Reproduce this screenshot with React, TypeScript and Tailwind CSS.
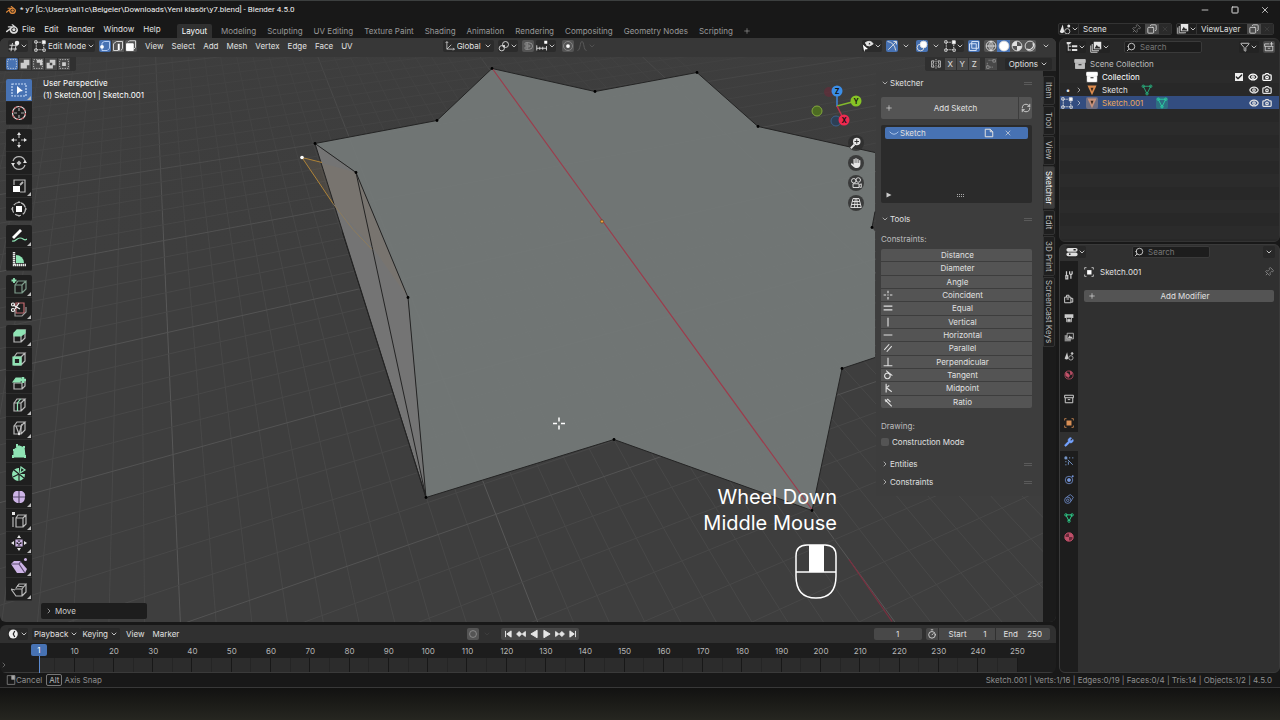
import type { ReactNode } from "react"
import {
  Camera,
  Check,
  ChevronDown,
  ChevronRight,
  Copy,
  Eye,
  Filter,
  Magnet,
  Minus,
  Pin,
  Plus,
  RefreshCw,
  Search,
  Square,
  Timer,
  Wrench,
  X,
} from "lucide-react"
import { SiBlender } from "react-icons/si"
import { FaHand } from "react-icons/fa6"

/* ---------- small building blocks ---------- */

function Svg({ children, className = "w-3 h-3" }: { children: ReactNode; className?: string }) {
  return (
    <svg
      viewBox="0 0 16 16"
      className={`shrink-0 ${className}`}
      fill="none"
      stroke="currentColor"
      strokeWidth="1.2"
      aria-hidden="true"
    >
      {children}
    </svg>
  )
}

function IconButton({
  label,
  className = "",
  children,
}: {
  label: string
  className?: string
  children: ReactNode
}) {
  return (
    <button aria-label={label} className={`flex shrink-0 items-center justify-center ${className}`}>
      {children}
    </button>
  )
}

function Chevron() {
  return <ChevronDown className="w-2 h-2 shrink-0 text-[#c0c0c0]" strokeWidth={3} />
}

/* ---------- icons ---------- */

const editorIcon = (
  <Svg>
    <path d="M2 7h11M1 12h11M6 4 4 15M11 6l-2 9" />
    <circle cx="12" cy="4" r="3" fill="#eee" stroke="none" />
  </Svg>
)

const editModeIcon = (
  <Svg>
    <path d="M4 3h6M3 4v8M4 13h8M13 6v6" strokeDasharray="2 1" />
    <path d="M1 1h3v3H1zM1 12h3v3H1zM12 12h3v3h-3z" />
    <path d="M11 1h4v4h-4z" fill="#fff" />
  </Svg>
)

const vertexIcon = (
  <Svg>
    <path d="M4 7V4l3-2h7v9l-3 3H4v-3" stroke="#bcd3f7" />
    <circle cx="4" cy="9" r="2.5" fill="#fff" stroke="none" />
  </Svg>
)

const edgeIcon = (
  <Svg>
    <path d="M8 14H2V5l4-3h8v9l-2 3" />
    <path d="M9 5v9" stroke="#fff" strokeWidth="2.6" />
  </Svg>
)

const faceIcon = (
  <Svg>
    <path d="M2 5h9v9H2z" fill="#fff" stroke="#fff" />
    <path d="m4 3 2-2h8v9l-2 2" />
  </Svg>
)

const sceneIcon = (
  <Svg>
    <path d="M5 2 1 12q3 3 6 0z" fill="#e6e6e6" stroke="none" />
    <circle cx="11" cy="11" r="3.5" />
    <circle cx="13" cy="4" r="2" fill="#e6e6e6" stroke="none" />
  </Svg>
)

const layerIcon = (
  <Svg>
    <path d="M5 1h10v10H5z" fill="#e6e6e6" stroke="none" />
    <path d="m6 10 3-5 2 3 1-1 2 3z" fill="#2a2a2a" stroke="none" />
    <path d="M3 4v9h9M1 6v9h9" />
  </Svg>
)

const collectionIcon = (
  <Svg>
    <path d="M1 2h14v4H1z" fill="currentColor" />
    <path d="M2 7h12v7H2z" fill="currentColor" />
    <path d="M6 9h4" stroke="#222" strokeWidth="1.6" />
  </Svg>
)

const meshData = (
  <Svg>
    <path d="M3 3h10L8 13z" />
    <circle cx="3" cy="3" r="1.6" />
    <circle cx="13" cy="3" r="1.6" />
    <circle cx="8" cy="13" r="1.6" />
  </Svg>
)

const meshObject = (
  <Svg>
    <path d="M2 2h12L8 15z" fill="currentColor" stroke="none" />
    <path d="M6 5h4L8 10z" fill="#3a2a20" stroke="none" />
  </Svg>
)

const sphere = (kind: string) => (
  <Svg>
    <circle cx="8" cy="8" r="6.5" fill={kind === "solid" ? "#fff" : "none"} />
    {kind === "wire" && <path d="M1.5 8h13M8 1.5v13M8 1.5q-6 6.5 0 13M8 1.5q6 6.5 0 13" />}
    {kind === "material" && (
      <path d="M8 1.5V8h6.5A6.5 6.5 0 0 1 8 14.5V8H1.5A6.5 6.5 0 0 1 8 1.5z" fill="currentColor" stroke="none" />
    )}
    {kind === "rendered" && <path d="M12 4a6 6 0 0 1-8 8" strokeWidth="1.6" />}
  </Svg>
)

const green = "#8fe3b4"
const lilac = "#cdb4e6"

// wire cube shared by most of the mesh tools
const cube = <path d="M3 6h7v8H3zM3 6l3-4h8l-4 4M14 2v8l-4 4" />

const toolGroups: { name: string; more?: boolean; art: ReactNode }[][] = [
  [
    {
      name: "Select Box",
      more: true,
      art: (
        <>
          <path d="M1 2h14v12H1z" strokeDasharray="2 1" stroke="#c9dcf8" />
          <path d="m6 4 6 5-3 .5L6 12z" fill="#fff" stroke="none" />
        </>
      ),
    },
    {
      name: "Cursor",
      art: (
        <>
          <circle cx="8" cy="8" r="6.500" stroke="#e9e9e9" />
          <circle cx="8" cy="8" r="6.500" stroke="#c65f64" strokeDasharray="2.500 2.500" />
          <path d="M8 3v3M8 10v3M3 8h3M10 8h3" stroke="#aaa" />
        </>
      ),
    },
  ],
  [
    {
      name: "Move",
      art: (
        <>
          <path d="M8 3v3M8 10v3M3 8h3M10 8h3" />
          <path d="m8 0 2 3H6zM8 16l2-3H6zM0 8l3-2v4zM16 8l-3-2v4z" fill="#e6e6e6" stroke="none" />
        </>
      ),
    },
    {
      name: "Rotate",
      art: (
        <>
          <path d="M2 6a6.300 6.300 0 0 1 12 0M14 10a6.300 6.300 0 0 1-12 0" />
          <path d="M0 8h4l-2 3zM12 8h4l-2-3z" fill="#e6e6e6" stroke="none" />
          <path d="m8 5.500 2.500 2.500L8 10.500 5.500 8z" fill="#bbb" stroke="none" />
        </>
      ),
    },
    {
      name: "Scale",
      more: true,
      art: (
        <>
          <path d="M3 7V2h11v12H9" />
          <path d="M2 8h7v6H2z" fill="#fff" stroke="none" />
          <path d="m9 7 3-3" strokeWidth="1.800" />
        </>
      ),
    },
    {
      name: "Transform",
      art: (
        <>
          <circle cx="8" cy="8" r="6.500" strokeDasharray="6 2" />
          <path d="M5 5h6v6H5z" fill="#fff" stroke="none" />
          <path d="m8 0 2 2H6zM8 16l2-2H6zM0 8l2-2v4zM16 8l-2-2v4z" fill="currentColor" stroke="none" />
        </>
      ),
    },
  ],
  [
    {
      name: "Annotate",
      more: true,
      art: (
        <>
          <path d="m2 10 8-8" stroke="#fff" strokeWidth="2.800" />
          <path d="M1 13c4 1 4-3 8-3s4 4 7 1" stroke={green} />
        </>
      ),
    },
    {
      name: "Measure",
      art: (
        <>
          <path d="M5 12V4a8 8 0 0 1 8 8z" fill={green} stroke="none" />
          <path d="M3 1v13h12" stroke="#e6e6e6" strokeWidth="2.400" strokeDasharray="1.500 .5" />
        </>
      ),
    },
  ],
  [
    {
      name: "Add Cube",
      more: true,
      art: (
        <>
          <path d="M4 7h7v8H4zM4 7l3-4h8l-4 4M15 3v8l-4 4" stroke="#7d9c8b" />
          <path d="M3 0v5M.5 2.500h5" stroke={green} strokeWidth="1.800" />
        </>
      ),
    },
    {
      name: "Bisect",
      more: true,
      art: (
        <>
          <path d="M5 2h8v10H5z" stroke="#c46a70" />
          <path d="M4 9v6h7l4-4V6" stroke="#999" />
          <path d="m2 4 7 4M4 8l4-6" stroke="#eee" strokeWidth="1.300" />
          <circle cx="2" cy="9" r="1.500" stroke="#eee" />
          <circle cx="2" cy="3.500" r="1.500" stroke="#eee" />
        </>
      ),
    },
  ],
  [
    {
      name: "Extrude Region",
      more: true,
      art: (
        <>
          {cube}
          <path d="M3 8V5l3-3h8v3l-4 3z" fill={green} stroke={green} />
        </>
      ),
    },
    {
      name: "Inset Faces",
      art: (
        <>
          {cube}
          <path d="M2 6h8v8H2z" fill={green} stroke={green} />
          <path d="M4.500 8.500h3v3h-3z" fill="#222" stroke="#222" />
        </>
      ),
    },
    {
      name: "Bevel",
      art: (
        <>
          <path d="M3 9h8v6H3zM14 7v5l-3 3" />
          <path d="m2 8 3-4h5l-1 4z" fill={green} stroke={green} />
          <path d="M12 3v6M10 6h5" stroke={green} strokeWidth="2.500" />
        </>
      ),
    },
    {
      name: "Loop Cut",
      more: true,
      art: (
        <>
          {cube}
          <path d="M6.500 14V6l3-4" stroke={green} />
        </>
      ),
    },
    {
      name: "Knife",
      more: true,
      art: (
        <>
          {cube}
          <path d="m5 6 3 8 3-10" />
          <circle cx="8" cy="14" r="1" fill="#fff" stroke="none" />
        </>
      ),
    },
    {
      name: "Poly Build",
      art: (
        <>
          <path d="m3 7 5-4 5 2 1 9H3z" fill={green} stroke={green} />
          <path d="M6 1v3M2 12v3M14 12v3M13 3v2M3 6v2" stroke={green} strokeWidth="2" />
        </>
      ),
    },
    {
      name: "Spin",
      art: (
        <>
          <path d="M8 8V2a6.500 6.500 0 1 0 6 6z" fill={green} stroke="none" />
          <path d="M8 8 3 4M8 8l-6 3M8 8v7M8 8l5 4" stroke="#222" />
          <path d="m9 7 1-6 4 3z" stroke={green} />
        </>
      ),
    },
    {
      name: "Smooth",
      more: true,
      art: (
        <>
          <path d="M5 2h6q4 2 3 6 0 5-4 6H6Q1 12 2 7q0-4 3-5z" fill={lilac} stroke="none" />
          <path d="M2 8h12M8 2v12" stroke="#5b4b6e" />
        </>
      ),
    },
    {
      name: "Edge Slide",
      more: true,
      art: (
        <>
          <path d="M5 6h7v9H5zM5 6l2-3h8l-3 3M15 3v9l-3 3M2 5v10" />
          <path d="M1 0h3v3H1z" fill="#e6e6e6" stroke="none" />
        </>
      ),
    },
    {
      name: "Shrink/Fatten",
      more: true,
      art: (
        <>
          <path d="M5 5h6v6H5zM5 5l6 6M11 5l-6 6" stroke={lilac} />
          <path d="m8 0 2 3H6zM8 16l2-3H6zM0 8l3-2v4zM16 8l-3-2v4z" fill="#e6e6e6" stroke="none" />
        </>
      ),
    },
    {
      name: "Shear",
      more: true,
      art: (
        <>
          <path d="M0 6l3-3h6l7 8-2 4H6z" fill={lilac} stroke="none" />
          <path d="M0 6h8l6 9M8 6l2-3" stroke="#5b4b6e" />
          <circle cx="14.500" cy="1.500" r="1.500" fill={lilac} stroke="none" />
        </>
      ),
    },
    {
      name: "Rip Region",
      more: true,
      art: <path d="M4 8h7v7H5L0 8l4 1M5 7l3-4h7l-4 5M15 3v8l-4 4M6 5l7 1" />,
    },
  ],
]

/* ---------- top bars ---------- */

const appMenus = ["File", "Edit", "Render", "Window", "Help"]
const workspaces = [
  "Layout",
  "Modeling",
  "Sculpting",
  "UV Editing",
  "Texture Paint",
  "Shading",
  "Animation",
  "Rendering",
  "Compositing",
  "Geometry Nodes",
  "Scripting",
]

function TitleBar() {
  return (
    <header className="flex h-5 items-center border-t border-[#3c3f3f] pl-1.5 pr-2.5 pb-0.5">
      <SiBlender className="w-2.5 h-2.5 mr-1 text-[#e08a3c]" />
      <h1 className="font-[Roboto,sans-serif] text-[8px] text-[#f0f0f0]">
        * y7 [C:\Users\ali1c\Belgeler\Downloads\Yeni klasör\y7.blend] - Blender 4.5.0
      </h1>
      <div className="ml-auto flex gap-5 text-[#dddddd]">
        <IconButton label="Minimize" className="w-2.5">
          <Minus className="w-2.5 h-2.5" />
        </IconButton>
        <IconButton label="Maximize" className="w-2.5">
          <Square className="w-2 h-2" strokeWidth={3} />
        </IconButton>
        <IconButton label="Close" className="w-2.5">
          <X className="w-2.5 h-2.5" />
        </IconButton>
      </div>
    </header>
  )
}

function DataBlock({ label, value, icon, pin }: { label: string; value: string; icon: ReactNode; pin?: boolean }) {
  return (
    <div className="flex h-3 items-center overflow-hidden rounded-xs border border-[#333] bg-[#1d1d1d]">
      <IconButton label={`Browse ${label}`} className="w-5 border-r border-[#333] text-[#cccccc]">
        {icon}
        <Chevron />
      </IconButton>
      <input
        aria-label={label}
        defaultValue={value}
        className={`bg-transparent px-1 text-[8px] outline-none ${pin ? "w-[52px]" : "w-[50px]"}`}
      />
      {pin && <Pin className="w-2.5 h-2.5 mr-1 rotate-45 text-[#777777]" />}
      <IconButton label={`New ${label}`} className="w-3.5 h-3 bg-[#4a4a4a]">
        <Copy className="w-2.5 h-2.5 -scale-x-100" />
      </IconButton>
      <IconButton label={`Remove ${label}`} className="w-3 h-3 bg-[#2a2a2a] text-[#444444]">
        <X className="w-2 h-2" />
      </IconButton>
    </div>
  )
}

function TopBar() {
  return (
    <div className="flex h-[18px] items-center pl-1.5 pr-1.5">
      <SiBlender className="w-3 h-3 mr-1 text-[#dddddd]" />
      <nav aria-label="Application" className="flex gap-[9px]">
        {appMenus.map((m) => (
          <button key={m}>{m}</button>
        ))}
      </nav>
      <nav aria-label="Workspaces" className="ml-4 flex h-3.5 items-center self-end text-[#989898]">
        {workspaces.map((w) => (
          <button
            key={w}
            className={
              w === "Layout" ? "h-full rounded-t-xs bg-[#303030] px-[5px] mr-1 text-white" : "h-full px-[5px] mr-px"
            }
          >
            {w}
          </button>
        ))}
        <IconButton label="Add Workspace" className="ml-1">
          <Plus className="w-2 h-2" />
        </IconButton>
      </nav>
      <div className="ml-auto flex gap-1">
        <DataBlock label="Scene" value="Scene" icon={sceneIcon} pin />
        <DataBlock label="View Layer" value="ViewLayer" icon={layerIcon} />
      </div>
    </div>
  )
}

/* ---------- 3D viewport ---------- */

const viewMenus = ["View", "Select", "Add", "Mesh", "Vertex", "Edge", "Face", "UV"]

function ViewportHeader() {
  return (
    <div className="relative flex h-[19px] items-center bg-[#373737] pl-2 pr-1 pb-[3px]">
      <IconButton label="Editor Type" className="w-5 h-3 rounded-xs bg-[#2b2b2b]">
        {editorIcon}
        <Chevron />
      </IconButton>
      <div className="ml-1 flex h-3 items-center rounded-xs bg-[#2b2b2b] pl-0.5">
        {editModeIcon}
        <select aria-label="Mode" className="appearance-none bg-transparent pl-0.5 outline-none">
          <option>Edit Mode</option>
        </select>
        <Chevron />
      </div>
      <div className="ml-1 mr-2 flex gap-px">
        <IconButton label="Vertex Select" className="w-3 h-3 rounded-xs bg-[#4772b3]">
          {vertexIcon}
        </IconButton>
        <IconButton label="Edge Select" className="w-3 h-3 bg-[#545454]">
          {edgeIcon}
        </IconButton>
        <IconButton label="Face Select" className="w-3 h-3 rounded-xs bg-[#545454]">
          {faceIcon}
        </IconButton>
      </div>
      <nav aria-label="Viewport" className="flex gap-2">
        {viewMenus.map((m) => (
          <button key={m}>{m}</button>
        ))}
      </nav>

      <div className="ml-[90px] flex h-3 items-center rounded-xs bg-[#2b2b2b] px-0.5">
        <Svg className="w-2.5 h-2.5">
          <path d="M3 1v12h12M3 13l7-7M1 3l2-2 2 2M13 11l2 2-2 2" />
        </Svg>
        <select aria-label="Transform Orientation" className="appearance-none bg-transparent px-0.5 outline-none">
          <option>Global</option>
        </select>
        <Chevron />
      </div>
      <IconButton label="Pivot Point" className="ml-1 w-5 h-3 rounded-xs bg-[#2b2b2b]">
        <Svg>
          <circle cx="10" cy="6" r="4" />
          <circle cx="5" cy="11" r="3.500" />
          <circle cx="8" cy="8" r="1" fill="#fff" />
        </Svg>
        <Chevron />
      </IconButton>
      <IconButton label="Snap" className="ml-1 w-3 h-3 rounded-xs bg-[#545454] text-[#999999]">
        <Magnet className="w-2.5 h-2.5 rotate-45" />
      </IconButton>
      <IconButton label="Snapping" className="ml-0.5 w-5 h-3 rounded-xs bg-[#2b2b2b]">
        <Svg>
          <path d="M1 7v7M1 11h13M14 8v6M5 9v4M9 9v4" />
          <path d="M11 1h4v4h-4z" fill="#fff" stroke="none" />
        </Svg>
        <Chevron />
      </IconButton>
      <IconButton label="Proportional Editing" className="ml-1.5 w-3 h-3 rounded-xs bg-[#545454]">
        <Svg>
          <circle cx="8" cy="8" r="6" stroke="#888" />
          <circle cx="8" cy="8" r="2.500" fill="#fff" stroke="none" />
        </Svg>
      </IconButton>
      <IconButton label="Falloff" className="ml-0.5 w-5 h-3 text-[#5e5e5e]">
        <Svg>
          <path d="M2 14c4 0 3-12 6-12s2 12 6 12" />
        </Svg>
        <ChevronDown className="w-2 h-2" />
      </IconButton>

      <div className="ml-auto flex items-center gap-1">
        <IconButton label="Visibility" className="w-5 h-3 rounded-xs bg-[#2b2b2b]">
          <Svg>
            <path d="M4 4q6-5 11 1-5 5-9 2" fill="#e6e6e6" />
            <circle cx="10" cy="5" r="1.500" fill="#222" />
            <path d="m1 6 7 6-4 .5L3 16z" fill="#fff" stroke="none" />
          </Svg>
          <Chevron />
        </IconButton>
        <IconButton label="Gizmos" className="w-3 h-3 rounded-xs bg-[#4772b3]">
          <Svg>
            <path d="M2 2q9 1 11 12M3 13 14 2M10 2h4v4" />
          </Svg>
        </IconButton>
        <IconButton label="Gizmo options" className="mr-0.5">
          <Chevron />
        </IconButton>
        <IconButton label="Overlays" className="w-3 h-3 rounded-xs bg-[#4772b3]">
          <Svg>
            <circle cx="6" cy="10" r="4.500" />
            <circle cx="10" cy="6" r="4.500" fill="#fff" />
          </Svg>
        </IconButton>
        <IconButton label="Overlay options">
          <Chevron />
        </IconButton>
        <IconButton label="Mesh Edit Overlays" className="w-5 h-3 rounded-xs bg-[#2b2b2b]">
          {editModeIcon}
          <Chevron />
        </IconButton>
        <IconButton label="Toggle X-Ray" className="w-3 h-3 rounded-xs bg-[#4772b3]">
          <Svg>
            <path d="M5 2h9v9H5zM2 5h9v9H2z" stroke="#dbe7fb" />
          </Svg>
        </IconButton>
        <div className="flex overflow-hidden rounded-xs bg-[#545454]">
          <IconButton label="Wireframe" className="w-[13px] h-3">
            {sphere("wire")}
          </IconButton>
          <IconButton label="Solid" className="w-[13px] h-3 bg-[#4772b3]">
            {sphere("solid")}
          </IconButton>
          <IconButton label="Material Preview" className="w-[13px] h-3">
            {sphere("material")}
          </IconButton>
          <IconButton label="Rendered" className="w-[13px] h-3">
            {sphere("rendered")}
          </IconButton>
        </div>
        <IconButton label="Shading options" className="w-3 h-3">
          <Chevron />
        </IconButton>
      </div>
    </div>
  )
}

const selectOps = [
  { name: "Set", d: "M2 2h12v12H2z", fill: "none" },
  { name: "Extend", d: "M6 1h9v9h-4v5H1V6h5z", fill: "#cccccc" },
  { name: "Subtract", d: "M6 1h9v9h-4V6H6z", fill: "#cccccc" },
  { name: "Invert", d: "M6 1h9v9h-4v5H1V6h5zM6 7v3h4V6H6z", fill: "#cccccc" },
  { name: "Intersect", d: "M5 5h6v6H5z", fill: "#cccccc" },
]

function ToolSettings() {
  return (
    <div className="relative flex h-3.5 items-center justify-between">
      <div className="flex h-full items-center gap-px rounded-br-xs bg-[#303030] pl-1.5 pr-1.5">
        {selectOps.map((op, i) => (
          <IconButton
            key={op.name}
            label={op.name}
            className={i === 0 ? "w-3 h-3 rounded-xs bg-[#4772b3]" : "w-3 h-3 bg-[#484848]"}
          >
            <Svg className="w-2.5 h-2.5">
              {i !== 1 && i !== 3 && <path d="M1 1h14v14H1z" strokeDasharray="2 2" />}
              <path d={op.d} fill={op.fill} fillRule="evenodd" stroke="none" />
            </Svg>
          </IconButton>
        ))}
      </div>
      <div className="flex h-full items-center rounded-bl-xs bg-[#303030] pl-1.5 pr-1">
        <Svg className="w-2.5 h-2.5 mr-1">
          <path d="M8 0v16" strokeDasharray="2 1" />
          <path d="M5 3H1v10h4l-2-5zM11 3h4v10h-4l2-5z" />
        </Svg>
        {["X", "Y", "Z"].map((axis) => (
          <button key={axis} className="w-[11px] h-3 mr-px bg-[#484848] leading-3">
            {axis}
          </button>
        ))}
        <IconButton label="Automerge" className="ml-1 mr-1 w-3 h-3 bg-[#484848] text-[#999999]">
          <Svg className="w-2.5 h-2.5">
            <path d="M4 2h8M2 6v6M6 13h6" strokeDasharray="2 1" />
            <path d="M11 1h4v4h-4zM1 11h4v4H1z" />
          </Svg>
        </IconButton>
        <button className="ml-1 flex h-3 items-center gap-0.5 rounded-xs bg-[#282828] px-1">
          Options
          <Chevron />
        </button>
      </div>
    </div>
  )
}

// Floor grid: one family of lines runs to each vanishing point.
const leftVanish = { x: 135, y: -413 }
const rightVanish = { x: 2600, y: -220 }
const columns = Array.from({ length: 46 }, (_, i) => i - 12)
const rows = Array.from({ length: 52 }, (_, i) => i + 18)

const outline =
  "492,69 595,92 697,73 758,127 875,153 875,212 872,228 875,232 875,358 842,369 812,511 614,440 426,498 408,298 356,173 315,144 437,121"
const vertices = [
  [492, 69],
  [595, 92],
  [697, 73],
  [758, 127],
  [872, 228],
  [842, 369],
  [812, 511],
  [614, 440],
  [426, 498],
  [408, 298],
  [356, 173],
  [315, 144],
  [437, 121],
]

function Scene3D() {
  return (
    <svg
      viewBox="0 38 1056 585"
      preserveAspectRatio="xMidYMid slice"
      className="absolute inset-0 h-full w-full"
      aria-hidden="true"
    >
      <defs>
        <linearGradient id="fade" x1="0" y1="0" x2="0" y2="1">
          <stop offset="0" stopColor="#3d3d3d" stopOpacity="0.7" />
          <stop offset="1" stopColor="#3d3d3d" stopOpacity="0" />
        </linearGradient>
      </defs>
      <rect y="38" width="1056" height="585" fill="#3e3e3e" />
      <g strokeWidth="1">
        {columns.map((k) => {
          const x = 805 - k * 31.5
          const far = 1.4
          return (
            <line
              key={k}
              x1={leftVanish.x}
              y1={leftVanish.y}
              x2={leftVanish.x + (x - leftVanish.x) * far}
              y2={leftVanish.y + 913 * far}
              stroke={k % 10 === 0 ? "#585858" : "#484848"}
            />
          )
        })}
        {rows.map((t) => {
          const y = 26600 / t - 413
          const slope = (rightVanish.y - y) / (rightVanish.x - 106)
          return (
            <line
              key={t}
              x1="0"
              y1={y - slope * 106}
              x2="1056"
              y2={y + slope * 950}
              stroke={t % 10 === 5 || t === 30 || t === 40 ? "#535353" : "#484848"}
            />
          )
        })}
      </g>
      <rect y="38" width="1056" height="220" fill="url(#fade)" />
      <path d="m849 560 43 62" stroke="#7c2f40" strokeWidth="1.300" />

      <polygon points="315,144 356,173 408,298 426,498" fill="#747474" />
      <polygon points="302,158 356,173 408,298 372,247 334,205" fill="#8a7a60" fillOpacity="0.2" />
      <polygon points={outline} fill="#727877" fillOpacity="0.96" />
      <path
        d="M356 173 315 144 437 121 492 69 595 92 697 73 758 127 875 153M875 212l-3 16M875 358l-33 11-30 142-198-71-188 58L315 144M356 173l52 125 18 200M356 173l16 74 54 251M342 232l84 266"
        fill="none"
        stroke="#242424"
        strokeWidth="1"
      />
      <path d="m322 163-20-5 31 46" fill="none" stroke="#b08438" strokeWidth="1" />
      <path d="m333 204 20 26 19 20" fill="none" stroke="#8d7b5c" strokeWidth="1" />
      <path d="m493 70 110 152 209 288" stroke="#9c3c4c" strokeWidth="1.200" fill="none" />
      {vertices.map(([x, y]) => (
        <circle key={`${x}-${y}`} cx={x} cy={y} r="1.400" fill="#000" />
      ))}
      <circle cx="302" cy="158" r="1.800" fill="#fff" />
      <circle cx="602" cy="222" r="1.600" fill="#f0a040" stroke="#5a3a10" strokeWidth=".6" />
      <path d="M559 418v4M559 426v4M553 424h4M561 424h4" stroke="#fff" strokeWidth="1.500" />
    </svg>
  )
}

function Toolbar() {
  return (
    <div className="relative mt-2 ml-1.5 flex w-[26px] flex-col gap-1">
      {toolGroups.map((group, g) => (
        <div key={g} className="flex flex-col overflow-hidden rounded-xs">
          {group.map((tool, i) => (
            <IconButton
              key={tool.name}
              label={tool.name}
              className={
                g === 0 && i === 0
                  ? "relative h-[23px] w-full border-b border-[#2a2a2a] bg-[#4772b3]"
                  : "relative h-[23px] w-full border-b border-[#2d2d2d] bg-[#1f1f1f] text-[#b8b8b8]"
              }
            >
              <Svg className="w-4 h-4">{tool.art}</Svg>
              {tool.more && (
                <Svg className="absolute right-px bottom-px h-1 w-1">
                  <path d="M16 0v16H0z" fill="#bbb" stroke="none" />
                </Svg>
              )}
            </IconButton>
          ))}
        </div>
      ))}
    </div>
  )
}

function NavGizmo() {
  return (
    <div className="mt-3 flex w-14 flex-col items-end">
      <svg viewBox="806 83 58 46" className="w-[58px] h-[46px]" role="img" aria-label="Axis gizmo">
        <circle cx="829" cy="92" r="5" fill="#6b2a38" fillOpacity=".6" />
        <circle cx="836" cy="121" r="5" fill="#2d3f55" stroke="#3c6189" />
        <path d="M837 107V92" stroke="#3f86d8" strokeWidth="1.500" />
        <path d="m837 106 19-5" stroke="#83b92c" strokeWidth="1.500" />
        <path d="m837 106 7 14" stroke="#c2304c" strokeWidth="1.500" />
        <circle cx="817" cy="111" r="5" fill="#4c6b22" stroke="#83a83c" />
        <circle cx="837" cy="91" r="5.500" fill="#3b8ee8" />
        <circle cx="856" cy="101" r="5.500" fill="#86c425" />
        <circle cx="844" cy="120" r="5.500" fill="#ee2a50" />
        <g fontSize="7" fontWeight="700" textAnchor="middle" fill="#111">
          <text x="837" y="94">Z</text>
          <text x="856" y="104">Y</text>
          <text x="844" y="123">X</text>
        </g>
      </svg>
      <div className="mt-1.5 flex flex-col gap-1 text-[#e6e6e6]">
        <IconButton label="Zoom" className="w-4 h-4 rounded-full bg-[#2d2d2d]/80">
          <Svg>
            <circle cx="9" cy="6" r="5" fill="#e6e6e6" stroke="none" />
            <path d="m6 10-5 5" strokeWidth="2.400" />
            <path d="M9 3v6M6 6h6" stroke="#222" />
          </Svg>
        </IconButton>
        <IconButton label="Pan" className="w-4 h-4 rounded-full bg-[#2d2d2d]/80">
          <FaHand className="w-2.5 h-2.5" />
        </IconButton>
        <IconButton label="Camera View" className="w-4 h-4 rounded-full bg-[#2d2d2d]/80">
          <Svg>
            <circle cx="5" cy="5" r="3" />
            <circle cx="11" cy="4" r="3" />
            <path d="M4 9h8v5H4zM12 11l3-2v5l-3-1" />
          </Svg>
        </IconButton>
        <IconButton label="Perspective" className="w-4 h-4 rounded-full bg-[#2d2d2d]/80">
          <Svg>
            <path d="M4 2h8l3 12H1zM3 6h10M2 10h12M7 2 6 14M9 2l1 12" />
          </Svg>
        </IconButton>
      </div>
    </div>
  )
}

const constraints: { name: string; d?: string }[] = [
  { name: "Distance" },
  { name: "Diameter" },
  { name: "Angle" },
  { name: "Coincident", d: "M8 1v4M8 11v4M1 8h4M11 8h4M7 8h2" },
  { name: "Equal", d: "M1 5h14M1 11h14" },
  { name: "Vertical", d: "M8 1v14" },
  { name: "Horizontal", d: "M1 8h14" },
  { name: "Parallel", d: "m2 11 8-9M6 14l8-9" },
  { name: "Perpendicular", d: "M8 1v13M1 14h14" },
  { name: "Tangent", d: "M7 5a4.500 4.500 0 1 0 .1 0M5 1l10 8" },
  { name: "Midpoint", d: "M5 1v14M6 8l8 6M6 7l4-3" },
  { name: "Ratio", d: "m3 4 11 11M7 3l5 5M4 8l3-4" },
]

const sideTabs = [
  { name: "Item", size: "h-[29px]" },
  { name: "Tool", size: "h-[29px]" },
  { name: "View", size: "h-[29px]" },
  { name: "Sketcher", size: "h-[43px]" },
  { name: "Edit", size: "h-[25px]" },
  { name: "3D Print", size: "h-10" },
  { name: "Screencast Keys", size: "h-[70px]" },
]

function PanelHeader({ title, open, className = "" }: { title: string; open?: boolean; className?: string }) {
  return (
    <div className={`flex items-center ${className}`}>
      <button aria-expanded={!!open} className="flex items-center">
        {open ? <ChevronDown className="w-2 h-2 mr-px" /> : <ChevronRight className="w-2 h-2 mr-px" />}
        {title}
      </button>
      <span className="ml-auto h-[3px] w-2 border-y border-[#5a5a5a]" />
    </div>
  )
}

function Sidebar() {
  return (
    <div className="flex">
      <div className="h-fit w-[167px] bg-[#3d3d3d] pt-1.5 pr-[11px] pb-2 pl-[5px]">
        <PanelHeader title="Sketcher" open className="h-3" />
        <div className="mt-2 flex h-[22px] gap-px">
          <button className="flex flex-1 items-center rounded-l-xs bg-[#545454] pl-1">
            <Plus className="w-2 h-2" />
            <span className="flex-1">Add Sketch</span>
          </button>
          <IconButton label="Refresh" className="w-[13px] rounded-r-xs bg-[#545454]">
            <RefreshCw className="w-2.5 h-2.5" />
          </IconButton>
        </div>
        <div className="mt-1.5 flex h-[78px] flex-col rounded-xs bg-[#2b2b2b] px-1 pt-0.5">
          <div className="flex h-3 items-center rounded-xs bg-[#4772b3] px-1">
            <Svg className="w-2.5 h-2.5 mr-px">
              <path d="M1 6q7 8 14 0" stroke="#c9dcf8" />
            </Svg>
            Sketch
            <IconButton label="Edit sketch" className="ml-auto mr-2.5">
              <Svg className="w-2.5 h-2.5">
                <path d="M2 2h8l4 4v8H2zM10 2v4h4" strokeWidth="1.600" />
              </Svg>
            </IconButton>
            <IconButton label="Delete sketch" className="mr-3">
              <X className="w-2 h-2" />
            </IconButton>
          </div>
          <div className="mt-auto mb-1 flex items-center">
            <Svg className="w-2 h-2">
              <path d="m3 3 10 5-10 5z" fill="#ccc" stroke="none" />
            </Svg>
            <span className="mx-auto grid grid-cols-4 gap-px">
              {Array.from({ length: 8 }, (_, i) => (
                <i key={i} className="h-px w-px bg-[#aaa]" />
              ))}
            </span>
          </div>
        </div>

        <PanelHeader title="Tools" open className="mt-2.5 h-3" />
        <p className="mt-2 h-3 leading-3 text-[#bdbdbd]">Constraints:</p>
        <div className="mt-1 grid h-[159px] auto-rows-fr gap-px overflow-hidden rounded-xs">
          {constraints.map((c) => (
            <button key={c.name} className="flex items-center bg-[#545454] pl-0.5 leading-3">
              {c.d && (
                <Svg className="w-2.5 h-2.5">
                  <path d={c.d} strokeWidth="1.800" />
                </Svg>
              )}
              <span className="flex-1">{c.name}</span>
            </button>
          ))}
        </div>
        <p className="mt-3 h-3 leading-3 text-[#bdbdbd]">Drawing:</p>
        <label className="mt-1 flex h-3 items-center gap-[3px]">
          <input type="checkbox" className="h-2 w-2 appearance-none rounded-xs bg-[#545454]" />
          Construction Mode
        </label>
        <PanelHeader title="Entities" className="mt-2.5 h-3" />
        <PanelHeader title="Constraints" className="mt-1.5 h-3" />
      </div>
      <div role="tablist" aria-label="Sidebar" className="flex w-[13px] flex-col gap-px bg-[#1b1b1b] pt-[5px]">
        {sideTabs.map((t) => (
          <button
            key={t.name}
            role="tab"
            aria-selected={t.name === "Sketcher"}
            className={`flex w-3 shrink-0 items-center justify-center rounded-r-xs border border-[#333333] leading-[10px] whitespace-nowrap [writing-mode:vertical-rl] ${t.size} ${
              t.name === "Sketcher" ? "bg-[#3d3d3d] text-white" : "bg-[#1f1f1f] text-[#bdbdbd]"
            }`}
          >
            {t.name}
          </button>
        ))}
      </div>
    </div>
  )
}

function ScreencastKeys() {
  return (
    <div className="absolute right-[219px] bottom-[22px] flex flex-col items-end text-xl leading-[26px] text-white">
      <p>Wheel Down</p>
      <p>Middle Mouse</p>
      <svg
        viewBox="0 0 42 56"
        className="mt-2 h-14 w-[42px]"
        fill="none"
        stroke="#fff"
        strokeWidth="1.500"
        aria-hidden="true"
      >
        <path d="M1 12Q1 1 12 1h18q11 0 11 11v20q0 22-20 22T1 32zM1 28h40" />
        <path d="M14 1h15v27H14z" fill="#fff" stroke="none" />
      </svg>
    </div>
  )
}

function Viewport() {
  return (
    <section aria-label="3D Viewport" className="relative flex flex-1 flex-col overflow-hidden rounded-md">
      <Scene3D />
      <ViewportHeader />
      <ToolSettings />
      <div className="relative flex flex-1">
        <Toolbar />
        <div className="ml-[11px] mt-1.5 leading-3 text-white">
          <p>User Perspective</p>
          <p>(1) Sketch.001 | Sketch.001</p>
        </div>
        <div className="ml-auto mr-3 flex">
          <NavGizmo />
        </div>
        <Sidebar />
        <ScreencastKeys />
        <button className="absolute bottom-[3px] left-[41px] flex h-4 w-[106px] items-center gap-0.5 rounded-xs bg-[#1d1d1d] pl-1 text-[#cccccc]">
          <ChevronRight className="w-2 h-2" />
          Move
        </button>
      </div>
    </section>
  )
}

/* ---------- timeline ---------- */

const frames = Array.from({ length: 25 }, (_, i) => (i + 1) * 10)
const playback = [
  { name: "Jump to Start", d: "M4 3v10M13 3v10L6 8z" },
  { name: "Previous Keyframe", d: "m5 4 4 4-4 4-4-4zM15 4v8l-5-4z" },
  { name: "Play Reverse", d: "M13 2v12L3 8z" },
  { name: "Play", d: "M3 2v12l10-6z" },
  { name: "Next Keyframe", d: "m11 4 4 4-4 4-4-4zM1 4v8l5-4z" },
  { name: "Jump to End", d: "M12 3v10M3 3v10l7-5z" },
]

function Timeline() {
  return (
    <section aria-label="Timeline" className="relative overflow-hidden rounded-md bg-[#1d1d1d]">
      <div className="flex h-[18px] items-center bg-[#303030] pl-2 pr-1.5">
        <IconButton label="Editor Type" className="w-5 h-3 mr-1 rounded-xs bg-[#282828]">
          <Svg>
            <circle cx="7" cy="8" r="6" fill="#eee" stroke="none" />
            <path d="M9 4 7 8l2 4" stroke="#222" strokeWidth="1.600" />
          </Svg>
          <Chevron />
        </IconButton>
        <button className="flex h-3 items-center gap-0.5 rounded-xs bg-[#282828] px-0.5">
          Playback <Chevron />
        </button>
        <button className="flex h-3 items-center gap-0.5 rounded-xs bg-[#282828] px-0.5">
          Keying <Chevron />
        </button>
        <button className="ml-1.5">View</button>
        <button className="ml-2">Marker</button>
        <div className="mr-auto ml-72 flex items-center">
          <IconButton label="Auto Keying" className="w-3 h-3 rounded-xs bg-[#545454] text-[#999999]">
            <Svg className="w-2.5 h-2.5">
              <circle cx="8" cy="8" r="5.500" />
            </Svg>
          </IconButton>
          <ChevronDown className="w-2 h-2 mx-1 mr-2.5 text-[#444444]" />
          <div className="flex overflow-hidden rounded-xs bg-[#484848] text-[#e6e6e6]">
            {playback.map((p) => (
              <IconButton key={p.name} label={p.name} className="w-[13px] h-3">
                <Svg className="w-2.5 h-2.5">
                  <path d={p.d} fill="currentColor" strokeWidth="1.500" />
                </Svg>
              </IconButton>
            ))}
          </div>
        </div>
        <input
          aria-label="Current Frame"
          defaultValue="1"
          className="h-3 w-12 rounded-xs bg-[#484848] text-center outline-none"
        />
        <IconButton label="Use Preview Range" className="ml-1 w-3 h-3 rounded-l-xs bg-[#484848]">
          <Timer className="w-2.5 h-2.5" />
        </IconButton>
        <label className="ml-px flex h-3 items-center bg-[#484848] pl-2.5 pr-2">
          Start
          <input defaultValue="1" className="w-5 bg-transparent text-right outline-none" />
        </label>
        <label className="ml-px flex h-3 items-center rounded-r-xs bg-[#484848] px-2">
          End
          <input defaultValue="250" className="ml-2 w-4 bg-transparent text-right outline-none" />
        </label>
      </div>
      <div className="mr-[19px] ml-[55px] grid h-[15px] grid-cols-[repeat(25,minmax(0,1fr))] items-center text-center text-[#b5b5b5]">
        {frames.map((f) => (
          <span key={f}>{f}</span>
        ))}
      </div>
      <div className="flex h-[15px] border-b border-[#3a3a3a]">
        <div className="flex w-[39px] items-center">
          <ChevronRight className="w-2 h-2 text-[#888888]" />
        </div>
        <div className="w-4 border-r border-[#252525] bg-[#2c2c2c]" />
        <div className="grid flex-1 grid-cols-[repeat(25,minmax(0,1fr))]">
          {frames.map((f) => (
            <div key={f} className="flex">
              <i className="flex-1 border-r border-[#181818] bg-[#2c2c2c]" />
              <i className={f === 250 ? "flex-1" : "flex-1 border-r border-[#252525] bg-[#2c2c2c]"} />
            </div>
          ))}
        </div>
        <div className="w-[19px]" />
      </div>
      <div className="absolute top-[19px] bottom-0 left-[31px] flex w-4 flex-col items-center">
        <span className="h-3 w-4 rounded-xs bg-[#4772b3] text-center leading-3 text-white">1</span>
        <i className="w-px flex-1 bg-[#5b8ad0]" />
      </div>
    </section>
  )
}

/* ---------- outliner ---------- */

function RowToggles() {
  return (
    <>
      <IconButton label="Hide in Viewport">
        <Eye className="w-2.5 h-2.5" strokeWidth={3} />
      </IconButton>
      <IconButton label="Disable in Renders">
        <Camera className="w-2.5 h-2.5" strokeWidth={3} />
      </IconButton>
    </>
  )
}

function SearchBox({ label, className = "" }: { label: string; className?: string }) {
  return (
    <div
      className={`flex h-3 w-[78px] items-center gap-1 rounded-xs border border-[#3a3a3a] bg-[#1d1d1d] px-px ${className}`}
    >
      <Search className="w-2.5 h-2.5 shrink-0 -scale-x-100" />
      <input
        type="text"
        aria-label={label}
        placeholder="Search"
        className="w-full bg-transparent placeholder-[#777777] outline-none"
      />
    </div>
  )
}

function Outliner() {
  return (
    <section
      aria-label="Outliner"
      className="flex h-[204px] flex-col overflow-hidden rounded-md border border-[#333333] bg-[#282828]"
    >
      <div className="flex h-[18px] items-center pr-1 pb-[3px] pl-1.5">
        <IconButton label="Editor Type" className="w-5 h-3 rounded-xs bg-[#232323]">
          <Svg>
            <path d="M1 2h6M3 3v10M3 7h4M3 12h4" />
            <path d="M8 7h7M8 12h7M1 3h5" strokeWidth="2.600" />
          </Svg>
          <Chevron />
        </IconButton>
        <IconButton label="Display Mode" className="ml-1 w-5 h-3 rounded-xs bg-[#232323]">
          {layerIcon}
          <Chevron />
        </IconButton>
        <SearchBox label="Filter outliner" className="ml-3.5" />
        <IconButton label="Filter" className="ml-auto w-5 h-3 rounded-xs bg-[#232323]">
          <Filter className="w-2.5 h-2.5" />
          <Chevron />
        </IconButton>
        <IconButton label="New Collection" className="ml-1 w-3 h-3 rounded-xs bg-[#484848]">
          <Svg className="w-2.5 h-2.5">
            <path d="M1 3h7M1 3v4h14M2 7v7h12V7M6 10h4M12 0v6M9 3h6" />
          </Svg>
        </IconButton>
      </div>
      <ul className="flex-1 bg-[repeating-linear-gradient(#282828_0px_13px,#2b2b2b_13px_26px)]">
        <li className="flex h-[13px] items-center gap-1 pl-3.5 text-[#bdbdbd]">
          {collectionIcon}
          Scene Collection
        </li>
        <li className="flex h-[13px] items-center gap-1 pl-[26px] pr-[7px] text-white">
          <span className="rounded-xs bg-[#555555]">{collectionIcon}</span>
          Collection
          <label className="relative ml-auto mr-px flex">
            <input
              type="checkbox"
              defaultChecked
              aria-label="Exclude Collection"
              className="h-2 w-2 appearance-none bg-[#eeeeee]"
            />
            <Check className="absolute inset-0 h-2 w-2 text-[#222222]" strokeWidth={4} />
          </label>
          <RowToggles />
        </li>
        <li className="flex h-[13px] items-center gap-[3px] pl-1 pr-[7px]">
          <span className="w-2 text-center">•</span>
          <ChevronRight className="w-2 h-2" />
          <span className="text-[#dd8b4d]">{meshObject}</span>
          <span className="mr-2.5 ml-px">Sketch</span>
          <span className="text-[#27b07e]">{meshData}</span>
          <span className="ml-auto" />
          <RowToggles />
        </li>
        <li className="flex h-[13px] items-center gap-[3px] bg-[#334d80] pl-px pr-[7px]">
          {editModeIcon}
          <ChevronRight className="w-2 h-2 -ml-px" />
          <span className="rounded-xs bg-[#6d6e83] text-[#c9927a]">{meshObject}</span>
          <span className="mr-2.5 ml-px text-[#e8a75c]">Sketch.001</span>
          <span className="rounded-xs bg-[#2e6f82] text-[#2bd0a4]">{meshData}</span>
          <span className="ml-auto" />
          <RowToggles />
        </li>
      </ul>
    </section>
  )
}

/* ---------- properties ---------- */

const propertyTabs: { name: string; color: string; art: ReactNode }[][] = [
  [
    {
      name: "Tool",
      color: "text-[#cccccc]",
      art: <path d="M4 2v6M3 9h3v5H3zM9 2v4l2 2 2-2V2M11 8v6" strokeWidth="2" />,
    },
  ],
  [
    {
      name: "Render",
      color: "text-[#cccccc]",
      art: <path d="M1 5h10v9H1zM4 5V2h4v3M11 7h3v6h-3M4 8h4" strokeWidth="1.600" />,
    },
    {
      name: "Output",
      color: "text-[#cccccc]",
      art: (
        <>
          <path d="M1 2h14v6H1z" fill="currentColor" stroke="none" />
          <path d="M4 7h8v7H4z" fill="#222" />
          <path d="M6 10h4v3H6z" fill="currentColor" />
        </>
      ),
    },
    {
      name: "View Layer",
      color: "text-[#cccccc]",
      art: (
        <>
          <path d="M1 5h10v10H1z" fill="#888" stroke="none" />
          <path d="M5 2h10v9H5z" fill="#222" />
          <path d="m6 10 3-5 2 3 1-1 2 3z" fill="currentColor" stroke="none" />
        </>
      ),
    },
    {
      name: "Scene",
      color: "text-[#cccccc]",
      art: (
        <>
          <path d="M5 2 1 12q3 3 6 0z" fill="currentColor" stroke="none" />
          <circle cx="11" cy="11" r="3.500" />
          <circle cx="13" cy="4" r="1.500" fill="currentColor" />
        </>
      ),
    },
    {
      name: "World",
      color: "text-[#c4526a]",
      art: (
        <>
          <circle cx="8" cy="8" r="6.500" />
          <path d="M3 4l4 2 2 3-2 3-4-3zM10 2l3 3-2 3z" fill="currentColor" />
        </>
      ),
    },
  ],
  [
    {
      name: "Collection",
      color: "text-[#cccccc]",
      art: <path d="M1 2h14v4H1zM2 6v8h12V6M6 9h4" strokeWidth="1.600" />,
    },
  ],
  [
    {
      name: "Object",
      color: "text-[#d88f55]",
      art: (
        <>
          <path d="M4 4h8v8H4z" fill="currentColor" stroke="none" />
          <path d="M1 4V1h3M12 1h3v3M15 12v3h-3M4 15H1v-3" />
        </>
      ),
    },
    { name: "Modifiers", color: "text-[#74a2ff]", art: null },
    {
      name: "Particles",
      color: "text-[#7596c9]",
      art: (
        <>
          <circle cx="3" cy="3" r="2.500" fill="currentColor" stroke="none" />
          <path d="M8 3h2M13 3h2M3 8v2M3 13v2M6 6l8 8M7 9v5" strokeWidth="1.500" />
        </>
      ),
    },
    {
      name: "Physics",
      color: "text-[#7596d9]",
      art: (
        <>
          <circle cx="8" cy="8" r="6" />
          <circle cx="8" cy="8" r="2.500" fill="currentColor" />
          <circle cx="14" cy="2" r="1.500" fill="currentColor" stroke="none" />
        </>
      ),
    },
    {
      name: "Constraints",
      color: "text-[#7596d9]",
      art: (
        <>
          <circle cx="6" cy="10" r="5" />
          <circle cx="6" cy="10" r="2" />
          <path d="m4 5 6-4 5 4-4 7" />
        </>
      ),
    },
    {
      name: "Data",
      color: "text-[#2fd08c]",
      art: (
        <>
          <path d="M3 3h10L8 13z" strokeWidth="1.600" />
          <circle cx="3" cy="3" r="2" />
          <circle cx="13" cy="3" r="2" />
          <circle cx="8" cy="13" r="2" />
        </>
      ),
    },
    {
      name: "Material",
      color: "text-[#c0506a]",
      art: (
        <>
          <circle cx="8" cy="8" r="6.500" fill="currentColor" />
          <path d="M8 2a6 6 0 0 0-6 6h6zM8 8h6a6 6 0 0 1-6 6z" fill="#6b2a3a" stroke="none" />
          <circle cx="8" cy="8" r="6.500" />
        </>
      ),
    },
  ],
]

function Properties() {
  return (
    <section
      aria-label="Properties"
      className="flex flex-1 flex-col overflow-hidden rounded-md border border-[#3a3a3a] bg-[#303030]"
    >
      <div className="flex h-4 items-center pr-1 pb-[3px] pl-1.5">
        <IconButton label="Editor Type" className="w-5 h-3 rounded-xs bg-[#282828]">
          <Svg>
            <path d="M3 5h10M3 11h10" strokeWidth="5" strokeLinecap="round" />
            <path d="M10 5h3M4 11h2" stroke="#222" strokeWidth="2" />
          </Svg>
          <Chevron />
        </IconButton>
        <SearchBox label="Search properties" className="ml-[46px]" />
        <IconButton label="Options" className="ml-auto w-3 h-3 rounded-xs bg-[#282828]">
          <Chevron />
        </IconButton>
      </div>
      <div className="flex flex-1">
        <div role="tablist" aria-label="Properties" className="flex w-[18px] flex-col gap-[5px] bg-[#1d1d1d] pt-1">
          {propertyTabs.map((group, g) => (
            <div key={g} className="flex flex-col" role="presentation">
              {group.map((t) => (
                <button
                  key={t.name}
                  role="tab"
                  aria-label={t.name}
                  aria-selected={t.name === "Modifiers"}
                  className={`flex h-[19px] items-center justify-center ${t.color} ${
                    t.name === "Modifiers" ? "bg-[#303030]" : ""
                  }`}
                >
                  {t.name === "Modifiers" ? (
                    <Wrench className="w-2.5 h-2.5" fill="currentColor" />
                  ) : (
                    <Svg className="w-2.5 h-2.5">{t.art}</Svg>
                  )}
                </button>
              ))}
            </div>
          ))}
        </div>
        <div className="flex-1 pt-[5px] pr-[5px] pl-1.5">
          <div className="flex h-3 items-center gap-1.5">
            <Svg className="w-2.5 h-2.5">
              <path d="M5 5h7v7H5z" fill="#fff" stroke="none" />
              <path d="M1 4V1h3M12 1h3v3M15 12v3h-3M4 15H1v-3" />
            </Svg>
            Sketch.001
            <IconButton label="Pin" className="ml-auto text-[#888888]">
              <Pin className="w-2.5 h-2.5 rotate-45" />
            </IconButton>
          </div>
          <button className="mt-3 flex h-3 w-full items-center rounded-xs bg-[#545454] pl-1">
            <Plus className="w-2 h-2" />
            <span className="flex-1">Add Modifier</span>
          </button>
        </div>
      </div>
    </section>
  )
}

/* ---------- status bar ---------- */

function StatusBar() {
  return (
    <footer className="flex h-[15px] items-center border-b border-[#383838] pr-2 pl-1.5 text-[#8f8f8f]">
      <Svg className="w-2.5 h-2.5">
        <path d="M2 1h12v14H2z" />
        <path d="M9 1h5v6H9z" fill="#aaa" />
      </Svg>
      Cancel
      <kbd className="ml-1 mr-0.5 rounded-xs border border-[#777777] px-0.5 font-[inherit] leading-[10px] text-[#bbbbbb]">
        Alt
      </kbd>
      Axis Snap
      <span className="ml-auto">
        Sketch.001 | Verts:1/16 | Edges:0/19 | Faces:0/4 | Tris:14 | Objects:1/2 | 4.5.0
      </span>
    </footer>
  )
}

export default function App() {
  return (
    <div className="flex min-h-screen flex-col bg-[#181818] font-['Inter',sans-serif] text-[8px] leading-3 text-[#e0e0e0]">
      <TitleBar />
      <TopBar />
      <main className="flex flex-1 gap-[3px]">
        <div className="flex min-w-0 flex-1 flex-col gap-[3px]">
          <Viewport />
          <Timeline />
        </div>
        <aside className="flex w-[221px] flex-col gap-0.5">
          <Outliner />
          <Properties />
        </aside>
      </main>
      <StatusBar />
      <div className="h-8 bg-linear-to-b from-[#121211] to-[#262620]" />
    </div>
  )
}
